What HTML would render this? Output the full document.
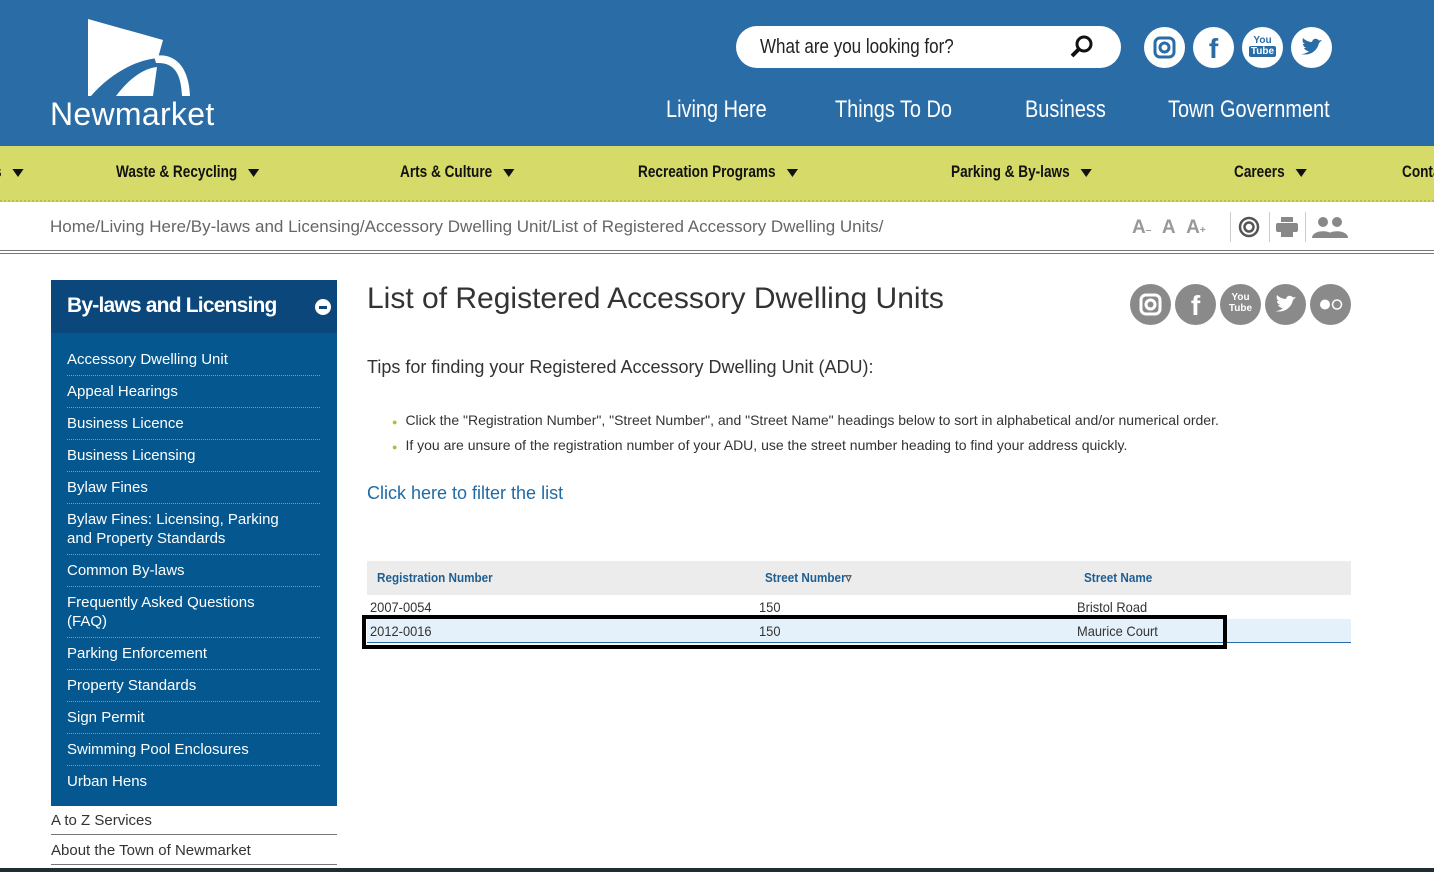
<!DOCTYPE html>
<html><head><meta charset="utf-8"><style>
*{margin:0;padding:0;box-sizing:border-box}
body{width:1434px;height:872px;overflow:hidden;font-family:"Liberation Sans",sans-serif;background:#fff;position:relative}
.abs{position:absolute}
.hdr{left:0;top:0;width:1434px;height:146px;background:#2a6ca6}
.n{display:inline-block;transform-origin:left center;white-space:nowrap}
.search{left:736px;top:26px;width:385px;height:42px;background:#fff;border-radius:21px}
.search span{position:absolute;left:24px;top:10px;font-size:20px;color:#222;transform:scaleX(0.85);transform-origin:left}
.soc{width:41px;height:41px;border-radius:50%;background:#fff;top:27px}
.mnav{top:96px;color:#fff;font-size:24px;transform:scaleX(0.83);transform-origin:left;white-space:nowrap}
.yb{left:0;top:146px;width:1434px;height:56px;background:#d5da68;border-bottom:2px dotted #b9bf50}
.yb div{position:absolute;top:16px;font-size:17px;font-weight:bold;color:#111;transform:scaleX(0.8);transform-origin:left;white-space:nowrap}
.tri{display:inline-block;width:0;height:0;border-left:7px solid transparent;border-right:7px solid transparent;border-top:8px solid #111;margin-left:14px;vertical-align:middle}
.bc{left:50px;top:217px;font-size:17px;color:#666}
.hl{left:0;top:250px;width:1434px;border-top:1px solid #777;border-bottom:1px solid #777;height:4px}
.side{left:51px;top:280px;width:286px;height:526px;background:#05578f}
.sideh{left:51px;top:280px;width:286px;height:53px;background:#0b477a;color:#fff;font-weight:bold;font-size:21px;padding:14px 16px;letter-spacing:-0.8px}
.sl{position:absolute;left:16px;width:253px;color:#fff;font-size:15px;border-bottom:1px dotted #6aa0cf;line-height:19px;padding-right:30px}
.gl{position:absolute;left:51px;width:286px;font-size:15px;color:#333;border-bottom:1px solid #777}
.gc{width:41px;height:41px;border-radius:50%;background:#8a8a8a;top:284px}
.th{top:570px;font-size:13px;color:#1d5e93;font-weight:bold;transform:scaleX(0.9);transform-origin:left;white-space:nowrap}
.td{font-size:14px;color:#333;transform:scaleX(0.92);transform-origin:left;white-space:nowrap}
</style></head><body>
<div class="abs hdr"></div>
<svg class="abs" style="left:86px;top:18px" width="108" height="80" viewBox="0 0 108 80">
<path d="M2 1 L77 22 L72 40 C50 42 25 55 5 78 L2 78Z" fill="#fff"/>
<path d="M30 78 C45 58 60 50 71 49 L67 78Z" fill="#fff"/>
<path d="M68 38 C88 34 103 48 104 78 L96 78 C95 55 88 44 70 45Z" fill="#fff"/>
</svg>
<div class="abs" style="left:50px;top:96px;color:#fff;font-size:32px;letter-spacing:0.3px">Newmarket</div>
<div class="abs search"><span>What are you looking for?</span>
<svg class="abs" style="left:334px;top:9px" width="24" height="24" viewBox="0 0 24 24"><circle cx="14" cy="9" r="7" fill="none" stroke="#111" stroke-width="3"/><path d="M9 14 L2 21" stroke="#111" stroke-width="4"/></svg></div>
<div class="abs soc" style="left:1144px"><svg width="41" height="41"><rect x="11" y="11" width="19" height="19" rx="5" fill="none" stroke="#2a6ca6" stroke-width="3"/><circle cx="20.5" cy="20.5" r="4.5" fill="none" stroke="#2a6ca6" stroke-width="3"/></svg></div>
<div class="abs soc" style="left:1193px;color:#2a6ca6;font-weight:bold;font-size:28px;text-align:center;line-height:43px">f</div>
<div class="abs soc" style="left:1242px;color:#2a6ca6;font-weight:bold;font-size:10px;text-align:center;line-height:11px;padding-top:8px">You<br><span style="background:#2a6ca6;color:#fff;padding:0 2px;border-radius:2px">Tube</span></div>
<div class="abs soc" style="left:1291px"><svg width="41" height="41" viewBox="0 0 41 41"><path d="M10 27 C18 29 26 25 28 16 L31 13 L28 13.5 C26 11 22 11 21 15 C17 15 14 13 12 11 C11 14 12 16 14 17 L12 17 C12 19 14 21 16 21 L13 21 C14 23 16 24 18 24 C16 26 13 27 10 27Z" fill="#2a6ca6"/></svg></div>
<div class="abs mnav" style="left:666px">Living Here</div>
<div class="abs mnav" style="left:835px">Things To Do</div>
<div class="abs mnav" style="left:1025px">Business</div>
<div class="abs mnav" style="left:1168px">Town Government</div>
<div class="abs yb">
<div style="left:-6px">s<span class="tri"></span></div>
<div style="left:116px">Waste &amp; Recycling<span class="tri"></span></div>
<div style="left:400px">Arts &amp; Culture<span class="tri"></span></div>
<div style="left:638px">Recreation Programs<span class="tri"></span></div>
<div style="left:951px">Parking &amp; By-laws<span class="tri"></span></div>
<div style="left:1234px">Careers<span class="tri"></span></div>
<div style="left:1402px">Contact</div>
</div>
<div class="abs bc">Home/Living Here/By-laws and Licensing/Accessory Dwelling Unit/List of Registered Accessory Dwelling Units/</div>
<div class="abs" style="left:1132px;top:217px;color:#999;font-weight:bold;font-size:19px">A<span style="font-size:10px">–</span>&nbsp;&nbsp;A&nbsp;&nbsp;A<span style="font-size:10px">+</span></div>
<div class="abs" style="left:1230px;top:212px;width:1px;height:30px;background:#ccc"></div>
<div class="abs" style="left:1269px;top:212px;width:1px;height:30px;background:#ccc"></div>
<div class="abs" style="left:1305px;top:212px;width:1px;height:30px;background:#ccc"></div>
<svg class="abs" style="left:1238px;top:216px" width="22" height="22"><circle cx="11" cy="11" r="9" fill="none" stroke="#555" stroke-width="2.5"/><circle cx="11" cy="11" r="4.5" fill="none" stroke="#555" stroke-width="2.5"/></svg>
<svg class="abs" style="left:1276px;top:217px" width="22" height="20"><rect x="5" y="0" width="12" height="5" fill="#888"/><rect x="0" y="6" width="22" height="9" rx="2" fill="#888"/><rect x="5" y="12" width="12" height="8" fill="#888"/></svg>
<svg class="abs" style="left:1312px;top:216px" width="36" height="22"><circle cx="11" cy="6" r="5" fill="#888"/><path d="M0 22 C0 13 22 13 22 22Z" fill="#888"/><circle cx="25" cy="6" r="5" fill="#888"/><path d="M14 22 C14 13 36 13 36 22Z" fill="#888"/></svg>
<div class="abs hl"></div>
<div class="abs side">
<div class="sl" style="top:70px;padding-bottom:6px">Accessory Dwelling Unit</div>
<div class="sl" style="top:102px;padding-bottom:6px">Appeal Hearings</div>
<div class="sl" style="top:134px;padding-bottom:6px">Business Licence</div>
<div class="sl" style="top:166px;padding-bottom:6px">Business Licensing</div>
<div class="sl" style="top:198px;padding-bottom:6px">Bylaw Fines</div>
<div class="sl" style="top:230px;padding-bottom:6px">Bylaw Fines: Licensing, Parking and Property Standards</div>
<div class="sl" style="top:281px;padding-bottom:6px">Common By-laws</div>
<div class="sl" style="top:313px;padding-bottom:6px">Frequently Asked Questions (FAQ)</div>
<div class="sl" style="top:364px;padding-bottom:6px">Parking Enforcement</div>
<div class="sl" style="top:396px;padding-bottom:6px">Property Standards</div>
<div class="sl" style="top:428px;padding-bottom:6px">Sign Permit</div>
<div class="sl" style="top:460px;padding-bottom:6px">Swimming Pool Enclosures</div>
<div class="sl" style="top:492px;border:none">Urban Hens</div>
</div>
<div class="abs sideh">By-laws and Licensing</div>
<div class="abs" style="left:315px;top:299px;width:16px;height:16px;border-radius:50%;background:#fff"><div style="position:absolute;left:4px;top:7px;width:8px;height:2.5px;background:#0b477a"></div></div>
<div class="gl" style="top:812px;padding-bottom:5px">A to Z Services</div>
<div class="gl" style="top:842px;padding-bottom:5px">About the Town of Newmarket</div>
<div class="abs" style="left:0;top:868px;width:1434px;height:4px;background:#222c33"></div>
<div class="abs" style="left:367px;top:282px;font-size:30px;color:#333">List of Registered Accessory Dwelling Units</div>
<div class="abs gc" style="left:1130px"><svg width="41" height="41"><rect x="11" y="11" width="19" height="19" rx="5" fill="none" stroke="#fff" stroke-width="3"/><circle cx="20.5" cy="20.5" r="4.5" fill="none" stroke="#fff" stroke-width="3"/></svg></div>
<div class="abs gc" style="left:1175px;color:#fff;font-weight:bold;font-size:28px;text-align:center;line-height:43px">f</div>
<div class="abs gc" style="left:1220px;color:#fff;font-weight:bold;font-size:10px;text-align:center;line-height:11px;padding-top:8px">You<br>Tube</div>
<div class="abs gc" style="left:1265px"><svg width="41" height="41" viewBox="0 0 41 41"><path d="M10 27 C18 29 26 25 28 16 L31 13 L28 13.5 C26 11 22 11 21 15 C17 15 14 13 12 11 C11 14 12 16 14 17 L12 17 C12 19 14 21 16 21 L13 21 C14 23 16 24 18 24 C16 26 13 27 10 27Z" fill="#fff"/></svg></div>
<div class="abs gc" style="left:1310px"><svg width="41" height="41"><circle cx="15" cy="20.5" r="5" fill="#fff"/><circle cx="27" cy="20.5" r="4.5" fill="none" stroke="#fff" stroke-width="1.5"/></svg></div>
<div class="abs" style="left:367px;top:357px;font-size:18px;color:#333">Tips for finding your Registered Accessory Dwelling Unit (ADU):</div>
<div class="abs" style="left:392px;top:409px;font-size:14px;color:#333;line-height:23px">
<div><span style="color:#a8c03c;font-size:9px;margin-right:8px">●</span>Click the "Registration Number", "Street Number", and "Street Name" headings below to sort in alphabetical and/or numerical order.</div>
<div><span style="color:#a8c03c;font-size:9px;margin-right:8px">●</span>If you are unsure of the registration number of your ADU, use the street number heading to find your address quickly.</div>
</div>
<div class="abs" style="left:367px;top:483px;font-size:18px;color:#1f6aa5">Click here to filter the list</div>
<div class="abs" style="left:367px;top:561px;width:984px;height:34px;background:#ececec"></div>
<div class="abs th" style="left:377px">Registration Number</div>
<div class="abs th" style="left:765px">Street Number<span style="color:#555">▿</span></div>
<div class="abs th" style="left:1084px">Street Name</div>
<div class="abs" style="left:367px;top:619px;width:984px;height:24px;background:#e5f1fa;border-bottom:1px solid #2a6ca6"></div>
<div class="abs td" style="left:370px;top:599px">2007-0054</div>
<div class="abs td" style="left:759px;top:599px">150</div>
<div class="abs td" style="left:1077px;top:599px">Bristol Road</div>
<div class="abs td" style="left:370px;top:623px">2012-0016</div>
<div class="abs td" style="left:759px;top:623px">150</div>
<div class="abs td" style="left:1077px;top:623px">Maurice Court</div>
<div class="abs" style="left:362px;top:615px;width:865px;height:34px;border:4px solid #000"></div>
</body></html>
